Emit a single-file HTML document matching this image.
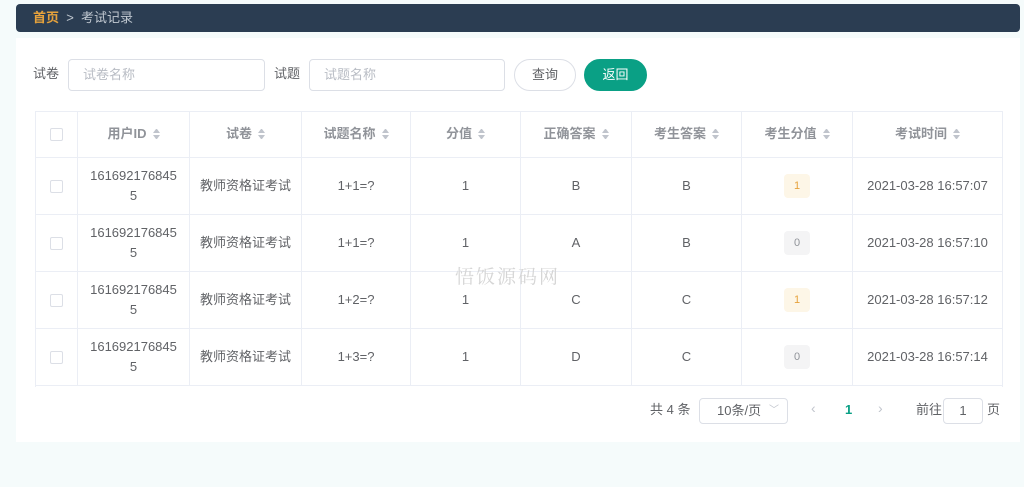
<!DOCTYPE html>
<html><head><meta charset="utf-8"><style>
*{margin:0;padding:0;box-sizing:border-box}
body{width:1024px;height:487px;background:#f5fbfb;font-family:"Liberation Sans","Noto Sans CJK SC",sans-serif;position:relative;overflow:hidden;color:#606266}
.a{position:absolute}
.bar{left:16px;top:4px;width:1004px;height:28px;background:#2b3d52;border-radius:4px;font-size:13px;line-height:28px;padding-left:17px;color:#c0c8d0}
.bar b{color:#e6a23c;font-weight:bold}
.card{left:16px;top:38px;width:1004px;height:404px;background:#fff}
.lbl{font-size:13px;color:#606266;line-height:16px}
.inp{height:32px;border:1px solid #dcdfe6;border-radius:4px;font-size:13px;color:#b8bcc4;line-height:30px;padding-left:14px;background:#fff}
.btn{height:32px;border-radius:16px;font-size:13px;line-height:30px;text-align:center}
.tbl{left:35px;top:111px;width:968px;height:276px;border:1px solid #ebeef5;border-bottom:none}
.cell{position:absolute;display:flex;align-items:center;justify-content:center;text-align:center;font-size:13px;color:#606266;border-right:1px solid #ebeef5;border-bottom:1px solid #ebeef5;line-height:20px}
.h{font-weight:bold;color:#909399}
.s{display:inline-block;width:7px;margin-left:6px;vertical-align:middle}
.s:before{content:"";display:block;border:3px solid transparent;border-bottom:4px solid #c0c4cc;border-top:none;margin-bottom:2px}
.s:after{content:"";display:block;border:3px solid transparent;border-top:4px solid #c0c4cc;border-bottom:none}
.cb{width:13px;height:13px;border:1px solid #dcdfe6;border-radius:2px;background:#fff}
.tag{width:26px;height:24px;border-radius:4px;font-size:11px;line-height:24px;text-align:center}
.y{background:#fdf6e7;color:#e6a23c}
.g{background:#f4f4f5;color:#909399}
</style></head><body>
<div class="a bar"><b>首页</b>&nbsp;&nbsp;&gt;&nbsp;&nbsp;考试记录</div>
<div class="a card"></div>
<div class="a lbl" style="left:33px;top:66px">试卷</div>
<div class="a inp" style="left:68px;top:59px;width:197px">试卷名称</div>
<div class="a lbl" style="left:274px;top:66px">试题</div>
<div class="a inp" style="left:309px;top:59px;width:196px">试题名称</div>
<div class="a btn" style="left:514px;top:59px;width:62px;border:1px solid #dcdfe6;color:#606266;background:#fff">查询</div>
<div class="a btn" style="left:584px;top:59px;width:63px;background:#0aa085;color:#fff;border:1px solid #0aa085">返回</div>
<div class="a tbl"></div>
<div id="t"></div>
<div class="a" style="left:455px;top:262px;font-size:19px;color:#d5d5d5;font-family:'Noto Serif CJK SC',serif;letter-spacing:2px">悟饭源码网</div>
<div class="a lbl" style="left:650px;top:402px">共 4 条</div>
<div class="a inp" style="left:699px;top:398px;width:89px;height:26px;line-height:24px;color:#606266;padding-left:17px">10条/页<span style="position:absolute;right:8px;top:0;color:#c0c4cc;font-size:10px">﹀</span></div>
<div class="a" style="left:811px;top:400px;color:#c0c4cc;font-size:14px">‹</div>
<div class="a" style="left:845px;top:402px;color:#0aa085;font-size:13px;font-weight:bold;line-height:16px">1</div>
<div class="a" style="left:878px;top:400px;color:#c0c4cc;font-size:14px">›</div>
<div class="a lbl" style="left:916px;top:402px">前往</div>
<div class="a inp" style="left:943px;top:398px;width:40px;height:26px;line-height:24px;color:#606266;padding:0;text-align:center">1</div>
<div class="a lbl" style="left:987px;top:402px">页</div>
<script>
var xs=[35,78,190,302,411,521,632,742,853,1003];
var ys=[111,158,215,272,329,386];
var hd=['','用户ID','试卷','试题名称','分值','正确答案','考生答案','考生分值','考试时间'];
var rows=[['B','B','y1','07','1+1=?'],['A','B','g0','10','1+1=?'],['C','C','y1','12','1+2=?'],['D','C','g0','14','1+3=?']];
var h='';
function c(i,r,content,cls){h+='<div class="cell '+(cls||'')+'" style="left:'+xs[i]+'px;top:'+ys[r]+'px;width:'+(xs[i+1]-xs[i])+'px;height:'+(ys[r+1]-ys[r])+'px">'+content+'</div>';}
for(var i=0;i<9;i++)c(i,0,i==0?'<div class="cb"></div>':hd[i]+'<span class="s"></span>','h');
rows.forEach(function(r,k){var R=k+1;
c(0,R,'<div class="cb"></div>');
c(1,R,'161692176845<br>5');
c(2,R,'教师资格证考试');
c(3,R,r[4]);c(4,R,'1');c(5,R,r[0]);c(6,R,r[1]);
c(7,R,'<div class="tag '+r[2][0]+'">'+r[2][1]+'</div>');
c(8,R,'2021-03-28 16:57:'+r[3]);});
document.getElementById('t').innerHTML=h;
</script>
</body></html>
